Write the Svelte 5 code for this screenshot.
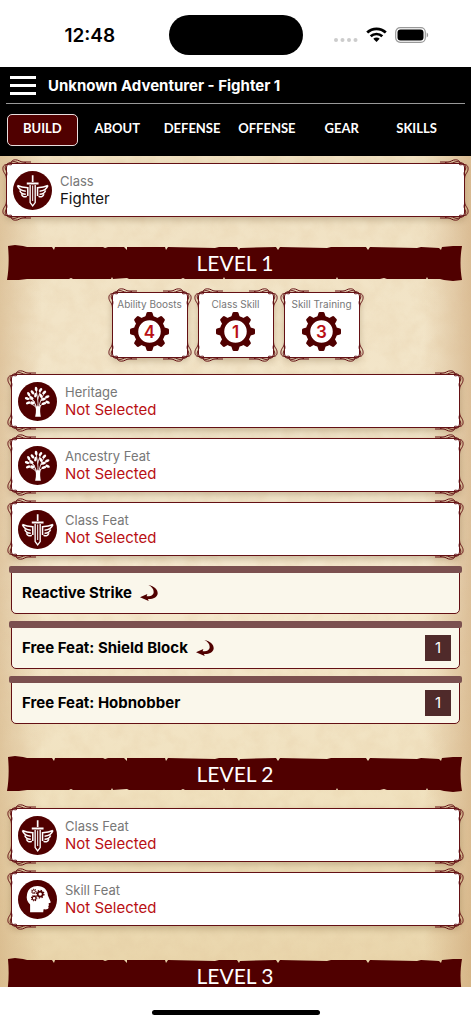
<script>
  const tabs = ['Build', 'About', 'Defense', 'Offense', 'Gear', 'Skills'];
  let active = $state('Build');

  const corners = ['tl', 'tr', 'bl', 'br'];
  const teeth = [0, 45, 90, 135, 180, 225, 270, 315];

  // x, y, rotation of each leaf on the ancestry tree
  const leaves = [
    [54, 21, -10], [43, 31, -40], [67, 24, 35], [32, 36, -30], [78, 31, 50],
    [27, 49, -70], [87, 44, 65], [52, 39, 10], [68, 41, -30], [40, 47, -60],
    [76, 51, 75], [30, 62, 65], [88, 60, -65], [43, 62, -75], [77, 64, 80],
  ];

  const levels = [
    {
      level: 1,
      boosts: [
        { label: 'Ability Boosts', count: 4 },
        { label: 'Class Skill', count: 1 },
        { label: 'Skill Training', count: 3 },
      ],
      choices: [
        { label: 'Heritage', icon: 'tree' },
        { label: 'Ancestry Feat', icon: 'tree' },
        { label: 'Class Feat', icon: 'sword' },
      ],
      feats: [
        { name: 'Reactive Strike', reaction: true },
        { name: 'Free Feat: Shield Block', reaction: true, rank: 1 },
        { name: 'Free Feat: Hobnobber', rank: 1 },
      ],
    },
    {
      level: 2,
      choices: [
        { label: 'Class Feat', icon: 'sword' },
        { label: 'Skill Feat', icon: 'head' },
      ],
    },
    { level: 3 },
  ];
</script>

{#snippet frame()}
  {#each corners as corner}
    <svg class="corner {corner}" viewBox="0 0 30 22" aria-hidden="true">
      <path d="M29 3H21C18 3 17 .8 13.500 .8C10 .8 8.500 3 9.500 5C10 6.500 8 5.500 4.500 5.500C1.500 5.500 .3 8.500 1.200 11.500C2 14.500 4.500 15 4.500 21" />
      <path d="M24 3.500C20 5 17 4.500 14 3C11 1.800 9 3.500 7 4C4 5 2.500 7.500 3.500 10C4.500 12.500 5.500 14 4.500 17" />
    </svg>
  {/each}
{/snippet}

{#snippet medallion(icon)}
  <svg class="medallion" viewBox="0 0 116 116" aria-hidden="true">
    <circle cx="58" cy="58" r="58" fill="#500000" />
    {#if icon === 'sword'}
      <path fill="#fff" d="M56 13h5v20h-5zM41 34h35v6H41z" />
      <path fill="none" stroke="#fff" stroke-width="4" d="M51 42V94L58.500 104L66 94V42" />
      <path fill="#fff" d="M57 43h3v46h-3z" />
      <g fill="none" stroke="#fff" stroke-width="4.500">
        <path d="M13 43C22 47 32 49 44 50V74M13 43C17 54 25 59 38 60M20 58C23 66 30 69 38 69M25 69C28 76 33 79 41 75" />
        <path d="M104 43C95 47 85 49 73 50V74M104 43C100 54 92 59 79 60M97 58C94 66 87 69 79 69M92 69C89 76 84 79 76 75" />
      </g>
    {:else if icon === 'tree'}
      <path
        fill="none"
        stroke="#fff"
        stroke-width="2.500"
        d="M56 78C50 69 40 66 32 62M54 71C50 60 42 52 33 40M50 60C46 52 36 50 28 49M59 78C61 58 57 42 54 24M59 52C61 42 64 34 67 28M62 78C64 60 72 44 78 34M68 57C74 50 80 48 86 45M64 72C72 66 80 64 87 60"
      />
      <path fill="#fff" d="M49 65C55 71 56 77 59 70C62 77 65 71 70 66C65 77 65 86 68 103H51C55 88 54 76 49 65z" />
      {#each leaves as [x, y, turn]}
        <ellipse cx={x} cy={y} rx="4" ry="7" fill="#fff" transform="rotate({turn} {x} {y})" />
      {/each}
    {:else}
      <path
        fill="#fff"
        d="M36 96V73C27 65 24 56 27 42C30 26 42 18 58 18C76 18 88 29 89 46L97 65C98 68 96 69 91 69L92 75L90 78L91 82C90 88 83 88 76 87L75 96z"
      />
      <g fill="none" stroke="#500000">
        <circle cx="66" cy="42" r="7.500" stroke-width="5" />
        <circle cx="66" cy="42" r="11" stroke-width="4" stroke-dasharray="4 4.640" />
        <circle cx="47" cy="34" r="4.500" stroke-width="2.500" />
        <circle cx="47" cy="34" r="6.500" stroke-width="3" stroke-dasharray="2.500 2.600" />
        <circle cx="48" cy="54" r="5.500" stroke-width="3.500" />
        <circle cx="48" cy="54" r="8" stroke-width="3" stroke-dasharray="3.500 2.780" />
      </g>
    {/if}
  </svg>
{/snippet}

{#snippet choice(label, value, icon, missing)}
  <button class="card choice">
    {@render frame()}
    {@render medallion(icon)}
    <span class="choice-text">
      <span class="choice-label">{label}</span>
      <span class="choice-value" class:missing>{value}</span>
    </span>
  </button>
{/snippet}

<div class="app">
  <div class="status">
    <span class="time">12:48</span>
    <span class="island"></span>
    <span class="indicators">
      <svg width="24" height="16" viewBox="0 0 24 16" fill="#ccc" aria-hidden="true">
        <circle cx="2" cy="13" r="2" /><circle cx="8.500" cy="13" r="2" />
        <circle cx="15" cy="13" r="2" /><circle cx="21.500" cy="13" r="2" />
      </svg>
      <svg width="21" height="16" viewBox="0 0 21 16" fill="none" stroke="#000" stroke-width="2.700" aria-hidden="true">
        <path d="M1.200 5.600C6.500 .6 14.500 .6 19.800 5.600M4.700 9.300C8 6.200 13 6.200 16.300 9.300" />
        <path d="M10.500 15L7.300 11.700C9 10.200 12 10.200 13.700 11.700z" fill="#000" stroke="none" />
      </svg>
      <svg width="34" height="16" viewBox="0 0 34 16" aria-hidden="true">
        <rect x=".7" y=".7" width="29.600" height="14.600" rx="4.500" fill="none" stroke="#999" stroke-width="1.200" />
        <rect x="2.500" y="2.500" width="26" height="11" rx="3" />
        <path d="M31.700 5.500C33.700 6.500 33.700 9.500 31.700 10.500z" fill="#999" />
      </svg>
    </span>
  </div>

  <header>
    <div class="title-row">
      <button class="menu" aria-label="Menu"><span></span><span></span><span></span></button>
      <h1>Unknown Adventurer - Fighter 1</h1>
    </div>
    <nav>
      {#each tabs as tab}
        <button class="tab" class:active={active === tab} onclick={() => (active = tab)}>{tab}</button>
      {/each}
    </nav>
  </header>

  <main>
    <svg class="grain" aria-hidden="true">
      <filter id="grain">
        <feTurbulence type="fractalNoise" baseFrequency="0.06" numOctaves="4" seed="7" />
        <feColorMatrix values="0 0 0 0 .72  0 0 0 0 .52  0 0 0 0 .3  .9 0 0 0 -.3" />
      </filter>
      <rect width="100%" height="100%" filter="url(#grain)" />
    </svg>

    <div class="class-row">
      {@render choice('Class', 'Fighter', 'sword', false)}
    </div>

    {#each levels as { level, boosts, choices, feats }}
      <section>
        <h2>
          <svg viewBox="0 0 456 36" preserveAspectRatio="none" aria-hidden="true">
            <path
              fill="#500000"
              d="M1 1L8 0L16 1L20 2L45 2L47 5L48 2L96 2L98 3L101 2L117 2L120 5L120 2L158 2L159 5L161 2L208 3L212 2L230 2L232 5L233 3L269 2L271 5L273 2L320 3L324 2L359 2L361 5L363 2L410 3L414 2L432 3L434 5L435 2L446 1L455 1C453 12 453 24 455 35L446 36L437 35L433 34L421 34L420 32L419 34L380 34L377 33L373 34L331 34L330 32L329 34L218 34L217 32L216 34L178 34L176 33L174 34L122 34L120 33L106 34L105 32L104 34L66 34L64 33L62 34L20 34L12 35L0 35C2 24 2 12 1 1z"
            />
          </svg>
          <span>LEVEL {level}</span>
        </h2>

        {#if boosts}
          <div class="boosts">
            {#each boosts as boost}
              <button class="card boost">
                {@render frame()}
                <span class="boost-label">{boost.label}</span>
                <span class="gear">
                  <svg viewBox="-58 -58 116 116" aria-hidden="true">
                    <g fill="#500000">
                      {#each teeth as turn}
                        <path d="M-13 -42L-9 -55Q-8 -58 -5 -58H5Q8 -58 9 -55L13 -42z" transform="rotate({turn})" />
                      {/each}
                    </g>
                    <circle r="40" fill="#fff" stroke="#500000" stroke-width="13" />
                  </svg>
                  <span>{boost.count}</span>
                </span>
              </button>
            {/each}
          </div>
        {/if}

        {#if choices}
          <div class="list">
            {#each choices as item}
              {@render choice(item.label, 'Not Selected', item.icon, true)}
            {/each}
            {#each feats ?? [] as feat}
              <button class="feat">
                <span class="feat-name">{feat.name}</span>
                {#if feat.reaction}
                  <svg class="reaction" viewBox="0 0 54 48" role="img" aria-label="Reaction">
                    <path
                      fill="#500000"
                      d="M25 0C43 3 54 14 53 26C51 37 38 43 24 42L26 48L0 37L22 27L20 34C34 35 41 29 41 21C41 12 35 5 25 0z"
                    />
                  </svg>
                {/if}
                {#if feat.rank}
                  <span class="rank">{feat.rank}</span>
                {/if}
              </button>
            {/each}
          </div>
        {/if}
      </section>
    {/each}
  </main>

  <footer><span class="home-bar"></span></footer>
</div>

<style>
  :global(body) {
    margin: 0;
    background: #fff;
  }

  .app {
    display: flex;
    flex-direction: column;
    height: 100vh;
    font-family: Inter, 'Liberation Sans', sans-serif;
    color: #111;
  }

  button {
    margin: 0;
    padding: 0;
    border: none;
    background: none;
    font: inherit;
    color: inherit;
    cursor: pointer;
  }

  .status {
    display: grid;
    grid-template-columns: 1fr 134px 1fr;
    align-items: center;
    height: 67px;
    flex: none;
  }

  .time {
    padding-left: 11px;
    padding-top: 3px;
    text-align: center;
    font-size: 19px;
    font-weight: 600;
    color: #000;
  }

  .island {
    height: 40px;
    margin-top: 3px;
    border-radius: 20px;
    background: #000;
  }

  .indicators {
    display: flex;
    align-items: center;
    gap: 8px;
    padding-left: 31px;
    padding-top: 2px;
  }

  .indicators svg {
    flex: none;
  }

  header {
    flex: none;
    background: #000;
    color: #fff;
  }

  .title-row {
    display: flex;
    align-items: center;
    gap: 12px;
    height: 36px;
    margin: 0 6px;
    padding-left: 4px;
    border-bottom: 1px solid #999;
  }

  .menu {
    display: flex;
    flex-direction: column;
    gap: 5px;
    width: 26px;
  }

  .menu span {
    height: 3px;
    background: #fff;
  }

  h1 {
    margin: 0;
    font-size: 15px;
    font-weight: 700;
  }

  nav {
    display: grid;
    grid-template-columns: repeat(6, 1fr);
    padding: 10px 17px 10px 5px;
  }

  .tab {
    height: 32px;
    margin: 0 2px;
    padding-bottom: 4px;
    border: 1px solid transparent;
    border-radius: 5px;
    font-family: Lato, sans-serif;
    font-size: 13px;
    font-weight: 700;
    text-transform: uppercase;
  }

  .tab.active {
    border-color: #e8dede;
    background: #500000;
  }

  main {
    position: relative;
    flex: 1;
    min-height: 0;
    overflow: hidden auto;
    scrollbar-width: none;
    background:
      linear-gradient(90deg, rgba(200, 160, 110, 0.45), transparent 9%, transparent 90%, rgba(195, 150, 100, 0.5)),
      linear-gradient(#f0e1c2, #f5e9cf 50%, #efdfba 85%, #e8d3a8);
  }

  .grain {
    position: absolute;
    inset: 0;
    width: 100%;
    height: 100%;
    opacity: 0.4;
  }

  .class-row {
    position: relative;
    display: grid;
    padding: 7px 6px 0 6px;
    margin-bottom: 28px;
  }

  section {
    position: relative;
    margin-bottom: 32px;
  }

  h2 {
    display: grid;
    place-items: center;
    height: 36px;
    margin: 0 8px 11px 7px;
    font-family: Lato, sans-serif;
    font-size: 21px;
    font-weight: 400;
    line-height: 36px;
    color: #fff;
  }

  h2 svg,
  h2 span {
    grid-area: 1 / 1;
  }

  h2 svg {
    width: 100%;
    height: 36px;
  }

  .card {
    position: relative;
    box-sizing: border-box;
    border: 1px solid #641014;
    border-radius: 4px;
    background: #fff;
    box-shadow: 0 3px 6px rgba(80, 50, 10, 0.25);
  }

  .corner {
    position: absolute;
    width: 30px;
    height: 22px;
    fill: none;
    stroke: #641014;
    stroke-width: 1;
  }

  .tl {
    top: -5px;
    left: -5px;
  }

  .tr {
    top: -5px;
    right: -5px;
    transform: scaleX(-1);
  }

  .bl {
    bottom: -5px;
    left: -5px;
    transform: scaleY(-1);
  }

  .br {
    right: -5px;
    bottom: -5px;
    transform: scale(-1);
  }

  .choice {
    display: flex;
    align-items: center;
    gap: 8px;
    height: 54px;
    padding: 0 6px;
    text-align: left;
  }

  .medallion {
    flex: none;
    width: 39px;
    height: 39px;
  }

  .choice-text {
    display: flex;
    flex-direction: column;
    line-height: 17px;
  }

  .choice-label {
    font-size: 13px;
    color: #777;
  }

  .choice-value {
    font-size: 15px;
  }

  .missing {
    color: #b90f14;
  }

  .boosts {
    display: flex;
    justify-content: center;
    gap: 10px;
    margin-bottom: 11px;
  }

  .boost {
    display: flex;
    flex-direction: column;
    align-items: center;
    width: 76px;
    height: 66px;
  }

  .boost-label {
    padding-top: 4px;
    font-size: 10px;
    line-height: 15px;
    white-space: nowrap;
    color: #777;
  }

  .gear {
    display: grid;
    place-items: center;
  }

  .gear svg,
  .gear span {
    grid-area: 1 / 1;
  }

  .gear svg {
    width: 39px;
    height: 39px;
  }

  .gear span {
    font-size: 17px;
    font-weight: 600;
    color: #b90f14;
  }

  .list {
    display: flex;
    flex-direction: column;
    gap: 10px;
    padding: 5px 11px 0 11px;
  }

  .feat {
    position: relative;
    display: flex;
    align-items: center;
    gap: 8px;
    box-sizing: border-box;
    height: 48px;
    padding: 5px 8px 0 10px;
    border: 1px solid #641014;
    border-radius: 5px;
    background: #faf7eb;
    text-align: left;
  }

  .feat + .feat {
    margin-top: -3px;
  }

  /* wooden rail that overhangs the card on both sides */
  .feat::before {
    content: '';
    position: absolute;
    top: -1px;
    left: -3px;
    right: -3px;
    height: 7px;
    border-radius: 2px;
    background: #7b504f;
  }

  .feat-name {
    font-size: 15px;
    font-weight: 700;
    color: #000;
  }

  .reaction {
    width: 18px;
    height: 16px;
  }

  .rank {
    width: 26px;
    margin-left: auto;
    background: #4f2a2a;
    color: #fff;
    font-size: 15px;
    line-height: 26px;
    text-align: center;
  }

  footer {
    display: grid;
    place-items: center;
    flex: none;
    height: 37px;
    padding-top: 13px;
    box-sizing: border-box;
    background: #fff;
  }

  .home-bar {
    width: 168px;
    height: 5px;
    border-radius: 3px;
    background: #000;
  }
</style>
